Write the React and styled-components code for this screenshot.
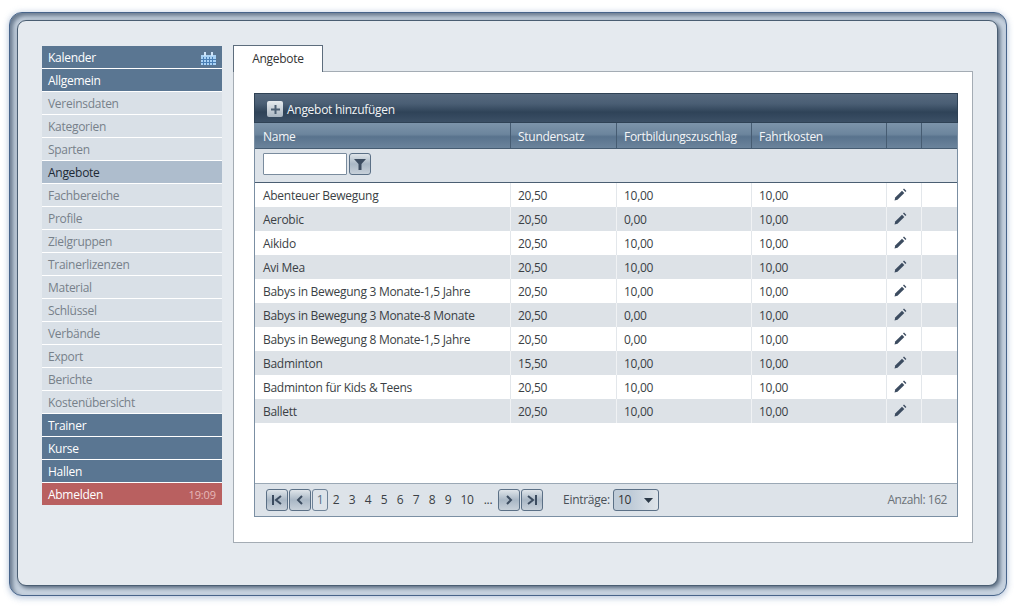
import React from 'react';
import styled, { createGlobalStyle } from 'styled-components';

const Global = createGlobalStyle`
  html, body { margin: 0; padding: 0; background: #fff; }
  #root { width: 1021px; height: 611px; overflow: hidden; }
  * { box-sizing: border-box; }
`;

const Page = styled.div`
  width: 1021px; height: 611px; padding: 12px 14px 15px 9px;
  font: 12px/16px "Open Sans", "Noto Sans", sans-serif;
  letter-spacing: -0.28px;
  color: #333;
`;
const Frame = styled.div`
  width: 998px; height: 584px; padding: 7px 8px 9px 7px;
  border: 1px solid #47648a; border-radius: 13px;
  background: #c6d2df;
  box-shadow: inset 3px 3px 4px rgba(55,75,100,.65), 0 0 6px rgba(120,150,190,.35), 0 3px 6px rgba(120,150,190,.3);
`;
const Panel = styled.div`
  height: 100%; display: flex; align-items: flex-start; gap: 11px;
  padding: 25px 24px 0 24px;
  background: #e5eaef; border: 1px solid #4a5e72; border-radius: 9px;
  box-shadow: 2px 2px 4px rgba(45,65,90,.75);
`;
const Side = styled.nav`
  width: 180px; display: flex; flex-direction: column; gap: 1px; background: #fff;
`;
const colors = {
  head: ['#5a7692', '#fff'],
  sub: ['#d9e0e7', '#77808a'],
  active: ['#aebdcd', '#1d2935'],
  out: ['#b96060', '#fff'],
};
const Item = styled.a`
  height: 22px; display: flex; align-items: center; justify-content: space-between;
  padding: 2px 6px 0 6px; font-size: 12px;
  background: ${p => colors[p.$k][0]}; color: ${p => colors[p.$k][1]};
`;
const Time = styled.span` font-size: 11px; color: #e6b9b9; letter-spacing: -0.1px; `;
const Main = styled.div` width: 740px; margin-top: -1px; `;
const Tab = styled.div`
  width: 90px; height: 27px; margin-bottom: -1px; position: relative; z-index: 1;
  display: flex; align-items: center; justify-content: center;
  background: #fff; border: 1px solid #5d6d7d; border-bottom: 0; color: #333;
`;
const Content = styled.div`
  height: 472px; background: #fff; border: 1px solid #a4acb4; padding: 21px 15px 0 20px;
`;
const Grid = styled.div`
  width: 704px; height: 424px; display: flex; flex-direction: column;
  border: 1px solid #7b8fa3; border-top: 0;
`;
const Toolbar = styled.div`
  height: 30px; flex: none; margin: 0 -1px; display: flex; align-items: center; gap: 4px; padding: 3px 12px 0 12px;
  border: 1px solid #2f4255;
  background: linear-gradient(#56697e 0, #4a5e74 35%, #2f4358 65%, #3c5066 100%);
  color: #f2f4f6; font-size: 12px;
`;
const AddIcon = styled.span`
  width: 16px; height: 16px; margin-top: -1px; border-radius: 2px; display: flex; align-items: center; justify-content: center;
  background: linear-gradient(#e6ebef, #aab6c2);
`;
const cols = '256px 106px 135px 135px 35px 1fr';
const Head = styled.div`
  height: 26px; flex: none; display: grid; grid-template-columns: ${cols};
  background: linear-gradient(#7d94aa 0, #6c859d 45%, #59738d 55%, #6b849c 100%);
  border-bottom: 1px solid #465c72;
`;
const HeadCell = styled.div`
  padding: 2px 0 0 ${p => p.$first ? 8 : 7}px; display: flex; align-items: center; color: #f4f6f8;
  border-right: ${p => p.$last ? 0 : '1px solid #465c72'};
`;
const Filter = styled.div`
  height: 34px; flex: none; display: flex; align-items: center; gap: 2px; padding: 0 8px 3px 8px;
  background: #dde3e9; border-bottom: 1px solid #4a5e72;
`;
const Input = styled.input`
  width: 84px; height: 22px; border: 1px solid #7a8c9e; background: #fff; padding: 0; border-radius: 1px;
`;
const Btn = styled.button`
  width: 22px; height: 22px; padding: 0; border: 1px solid #5b7086; border-radius: 3px;
  display: flex; align-items: center; justify-content: center;
  background: linear-gradient(#dfe5ea 0, #a9b7c5 50%, #c8d1da 100%);
`;
const Rows = styled.div` flex: 1; min-height: 0; background: #fff; `;
const Row = styled.div`
  height: 24px; display: grid; grid-template-columns: ${cols};
  background: ${p => p.$odd ? '#dde2e7' : '#fff'};
`;
const Cell = styled.div`
  padding: 1px 0 0 ${p => p.$first ? 8 : 7}px; display: flex; align-items: center; color: #3a3f45;
  border-right: ${p => p.$last ? 0 : `1px solid ${p.$odd ? '#f0f2f4' : '#e3e7eb'}`};
`;
const PencilSvg = styled.svg` margin-top: -3px; `;
const Pager = styled.div`
  height: 33px; flex: none; display: flex; align-items: center; padding: 0 10px 0 11px;
  background: #dde3e9; border-top: 1px solid #9aa8b5;
`;
const Nav = styled.div` display: flex; gap: 1px; `;
const Cur = styled.span`
  width: 16px; height: 22px; border: 1px solid #6f8398; border-radius: 3px;
  display: flex; align-items: center; justify-content: center; color: #5a6f85;
`;
const Num = styled.span`
  width: ${p => p.$w || 16}px; text-align: center; color: #3a3f45; font-size: 12px;
`;
const Label = styled.span` margin-left: 20px; width: 50px; color: #4a5058; `;
const Select = styled.div`
  width: 46px; height: 22px; border: 1px solid #5b7086; border-radius: 3px; padding: 0 5px 0 4px;
  display: flex; align-items: center; justify-content: space-between; color: #333;
  background: linear-gradient(90deg, #c0ccd8 0, #c0ccd8 40%, #dfe5ea 100%);
`;
const Count = styled.span` margin-left: auto; color: #6b7278; letter-spacing: -0.45px; `;

const Pencil = () => (
  <PencilSvg width="13" height="13" viewBox="0 0 13 13">
    <path d="M0.500 12.500l.7-3L8 2.700 10.300 5l-6.800 6.800z" fill="#3c4c60" />
    <path d="M9 1.600l1-1 2.400 2.400-1 1z" fill="#3c4c60" />
  </PencilSvg>
);
const CalIcon = () => (
  <svg width="15" height="13" viewBox="0 0 15 13">
    <rect x="0" y="3" width="15" height="10" fill="#a9d2f5" />
    <path d="M3 0h2v4H3zM10 0h2v4h-2z" fill="#cfe4f8" />
    <path d="M2.500 5v8M5.500 5v8M8.500 5v8M11.500 5v8M0 7.500h15M0 10.500h15" stroke="#4a7fb5" strokeWidth="1" />
  </svg>
);
const Plus = () => (
  <svg width="9" height="9" viewBox="0 0 9 9"><path d="M3.500 0h2v3.500H9v2H5.500V9h-2V5.500H0v-2h3.500z" fill="#4c5f73" /></svg>
);
const Funnel = () => (
  <svg width="12" height="11" viewBox="0 0 12 11"><path d="M0 0h12L7.500 5v6h-3V5z" fill="#3c4c60" /></svg>
);
const Arrow = ({ d }) => (
  <svg width="12" height="10" viewBox="0 0 12 10"><path d={d} fill="none" stroke="#3c4c60" strokeWidth="2" /></svg>
);

const menu = [
  ['Kalender', 'head'], ['Allgemein', 'head'], ['Vereinsdaten', 'sub'], ['Kategorien', 'sub'], ['Sparten', 'sub'],
  ['Angebote', 'active'], ['Fachbereiche', 'sub'], ['Profile', 'sub'], ['Zielgruppen', 'sub'], ['Trainerlizenzen', 'sub'],
  ['Material', 'sub'], ['Schlüssel', 'sub'], ['Verbände', 'sub'], ['Export', 'sub'], ['Berichte', 'sub'],
  ['Kostenübersicht', 'sub'], ['Trainer', 'head'], ['Kurse', 'head'], ['Hallen', 'head'], ['Abmelden', 'out'],
];
const data = [
  ['Abenteuer Bewegung', '20,50', '10,00', '10,00'],
  ['Aerobic', '20,50', '0,00', '10,00'],
  ['Aikido', '20,50', '10,00', '10,00'],
  ['Avi Mea', '20,50', '10,00', '10,00'],
  ['Babys in Bewegung 3 Monate-1,5 Jahre', '20,50', '10,00', '10,00'],
  ['Babys in Bewegung 3 Monate-8 Monate', '20,50', '0,00', '10,00'],
  ['Babys in Bewegung 8 Monate-1,5 Jahre', '20,50', '0,00', '10,00'],
  ['Badminton', '15,50', '10,00', '10,00'],
  ['Badminton für Kids & Teens', '20,50', '10,00', '10,00'],
  ['Ballett', '20,50', '10,00', '10,00'],
];

export default function App() {
  return (
    <Page>
      <Global />
      <Frame>
        <Panel>
          <Side>
            {menu.map(([t, k]) => (
              <Item key={t} $k={k}>
                {t}
                {t === 'Kalender' && <CalIcon />}
                {t === 'Abmelden' && <Time>19:09</Time>}
              </Item>
            ))}
          </Side>
          <Main>
            <Tab>Angebote</Tab>
            <Content>
              <Grid>
                <Toolbar><AddIcon><Plus /></AddIcon>Angebot hinzufügen</Toolbar>
                <Head>
                  <HeadCell $first>Name</HeadCell>
                  <HeadCell>Stundensatz</HeadCell>
                  <HeadCell>Fortbildungszuschlag</HeadCell>
                  <HeadCell>Fahrtkosten</HeadCell>
                  <HeadCell />
                  <HeadCell $last />
                </Head>
                <Filter>
                  <Input aria-label="Name" />
                  <Btn><Funnel /></Btn>
                </Filter>
                <Rows>
                  {data.map((r, i) => (
                    <Row key={r[0]} $odd={i % 2 === 1}>
                      {r.map((c, j) => <Cell key={j} $first={j === 0} $odd={i % 2 === 1}>{c}</Cell>)}
                      <Cell $odd={i % 2 === 1}><Pencil /></Cell>
                      <Cell $last />
                    </Row>
                  ))}
                </Rows>
                <Pager>
                  <Nav>
                    <Btn><Arrow d="M2 0v10M10 1L5 5l5 4" /></Btn>
                    <Btn><Arrow d="M8 1L4 5l4 4" /></Btn>
                    <Cur>1</Cur>
                  </Nav>
                  {['2', '3', '4', '5', '6', '7', '8', '9'].map(n => <Num key={n}>{n}</Num>)}
                  <Num $w={22}>10</Num>
                  <Num $w={20}>...</Num>
                  <Nav>
                    <Btn><Arrow d="M4 1l4 4-4 4" /></Btn>
                    <Btn><Arrow d="M10 0v10M2 1l5 4-5 4" /></Btn>
                  </Nav>
                  <Label>Einträge:</Label>
                  <Select>10<svg width="9" height="5" viewBox="0 0 9 5"><path d="M0 0h9L4.500 5z" fill="#2c3a48" /></svg></Select>
                  <Count>Anzahl: 162</Count>
                </Pager>
              </Grid>
            </Content>
          </Main>
        </Panel>
      </Frame>
    </Page>
  );
}
